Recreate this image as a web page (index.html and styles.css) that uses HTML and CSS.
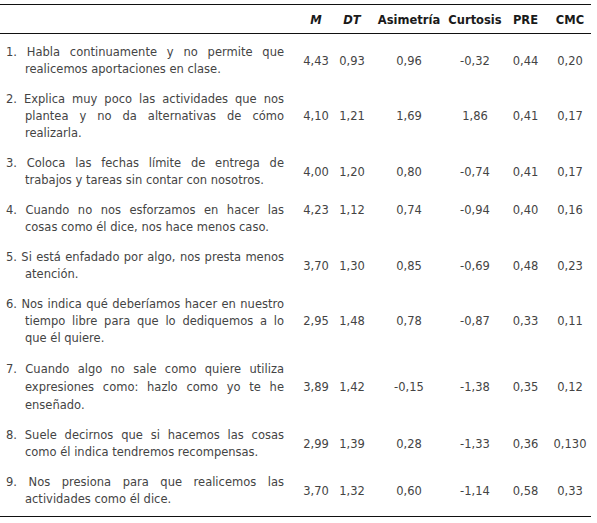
FILE: index.html
```html
<!DOCTYPE html>
<html lang="es">
<head>
<meta charset="utf-8">
<title>Tabla de ítems</title>
<link rel="stylesheet" href="styles.css">
</head>
<body>
<table class="stats">
  <colgroup>
    <col class="c-item"><col class="c-m"><col class="c-dt"><col class="c-asim"><col class="c-curt"><col class="c-pre"><col class="c-cmc">
  </colgroup>
  <thead>
    <tr>
      <th class="h-item"></th>
      <th><em>M</em></th>
      <th><em>DT</em></th>
      <th>Asimetría</th>
      <th>Curtosis</th>
      <th>PRE</th>
      <th>CMC</th>
    </tr>
  </thead>
  <tbody>
    <tr class="first">
      <td class="item"><span class="ln">1. Habla continuamente y no permite que</span><span class="ln cont end">realicemos aportaciones en clase.</span></td>
      <td>4,43</td><td>0,93</td><td>0,96</td><td>-0,32</td><td>0,44</td><td>0,20</td>
    </tr>
    <tr>
      <td class="item"><span class="ln">2. Explica muy poco las actividades que nos</span><span class="ln cont">plantea y no da alternativas de cómo</span><span class="ln cont end">realizarla.</span></td>
      <td>4,10</td><td>1,21</td><td>1,69</td><td>1,86</td><td>0,41</td><td>0,17</td>
    </tr>
    <tr>
      <td class="item"><span class="ln">3. Coloca las fechas límite de entrega de</span><span class="ln cont end">trabajos y tareas sin contar con nosotros.</span></td>
      <td>4,00</td><td>1,20</td><td>0,80</td><td>-0,74</td><td>0,41</td><td>0,17</td>
    </tr>
    <tr class="top">
      <td class="item"><span class="ln">4. Cuando no nos esforzamos en hacer las</span><span class="ln cont end">cosas como él dice, nos hace menos caso.</span></td>
      <td>4,23</td><td>1,12</td><td>0,74</td><td>-0,94</td><td>0,40</td><td>0,16</td>
    </tr>
    <tr>
      <td class="item"><span class="ln">5. Si está enfadado por algo, nos presta menos</span><span class="ln cont end">atención.</span></td>
      <td>3,70</td><td>1,30</td><td>0,85</td><td>-0,69</td><td>0,48</td><td>0,23</td>
    </tr>
    <tr>
      <td class="item"><span class="ln">6. Nos indica qué deberíamos hacer en nuestro</span><span class="ln cont">tiempo libre para que lo dediquemos a lo</span><span class="ln cont end">que él quiere.</span></td>
      <td>2,95</td><td>1,48</td><td>0,78</td><td>-0,87</td><td>0,33</td><td>0,11</td>
    </tr>
    <tr class="loose">
      <td class="item"><span class="ln">7. Cuando algo no sale como quiere utiliza</span><span class="ln cont">expresiones como: hazlo como yo te he</span><span class="ln cont end">enseñado.</span></td>
      <td>3,89</td><td>1,42</td><td>-0,15</td><td>-1,38</td><td>0,35</td><td>0,12</td>
    </tr>
    <tr>
      <td class="item"><span class="ln">8. Suele decirnos que si hacemos las cosas</span><span class="ln cont end">como él indica tendremos recompensas.</span></td>
      <td>2,99</td><td>1,39</td><td>0,28</td><td>-1,33</td><td>0,36</td><td>0,130</td>
    </tr>
    <tr class="last">
      <td class="item"><span class="ln">9. Nos presiona para que realicemos las</span><span class="ln cont end">actividades como él dice.</span></td>
      <td>3,70</td><td>1,32</td><td>0,60</td><td>-1,14</td><td>0,58</td><td>0,33</td>
    </tr>
  </tbody>
</table>
</body>
</html>
```
FILE: styles.css
```css
html, body {
  background: #ffffff;
}
body {
  margin: 4px 0 0 0;
  font-family: "DejaVu Sans", "Open Sans", sans-serif;
  font-size: 11.5px;
  color: #444444;
}
.stats {
  width: 591px;
  table-layout: fixed;
  border-collapse: collapse;
  border-top: 1px solid #111;
  border-bottom: 1px solid #111;
}
.c-item { width: 298px; }
.c-m { width: 36px; }
.c-dt { width: 36px; }
.c-asim { width: 78px; }
.c-curt { width: 54px; }
.c-pre { width: 47px; }
.c-cmc { width: 42px; }

.stats th {
  padding: 7px 0 4px;
  line-height: 17px;
  font-weight: bold;
  color: #1a1a1a;
  text-align: center;
  white-space: nowrap;
  border-bottom: 1px solid #111;
}
.stats th em {
  font-style: italic;
}
.stats td {
  padding: 8px 0 5px;
  line-height: 17px;
  text-align: center;
  vertical-align: middle;
  white-space: nowrap;
}
.stats td.item {
  padding-left: 6px;
  padding-right: 14px;
  text-align: left;
  white-space: normal;
}
.ln {
  display: block;
  text-align: justify;
  text-align-last: justify;
}
.ln.cont {
  padding-left: 19px;
}
.ln.end {
  text-align-last: left;
}
.first td {
  padding-top: 10px;
}
.top td {
  vertical-align: top;
}
.loose td.item {
  line-height: 18px;
}
.last td {
  padding-bottom: 8px;
}
```
